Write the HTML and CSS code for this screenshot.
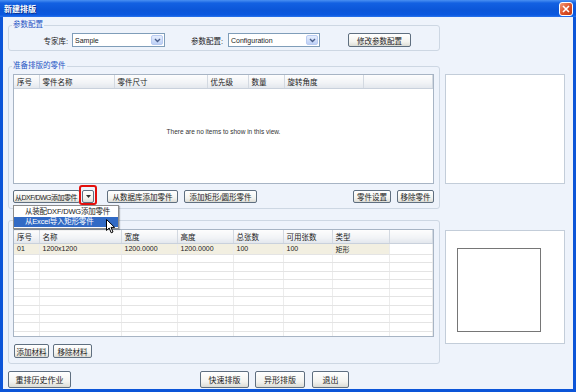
FILE: index.html
```html
<!DOCTYPE html>
<html lang="zh-CN">
<head>
    <meta charset="UTF-8">
    <title>新建排版</title>
    <link rel="stylesheet" href="styles.css">
</head>
<body>

<div class="window">
    <div class="titlebar">
        <span class="title">新建排版</span>
        <span class="close">
            <svg width="8" height="8" viewBox="0 0 8 8"><path d="M1 1l6 6M7 1L1 7" stroke="#fff" stroke-width="1.6"/></svg>
        </span>
    </div>

    <div class="client">
        <!-- 参数配置 -->
        <div class="group group-params">
            <div class="group-title">参数配置</div>
            <div class="param-row">
                <label class="param-label label-lib">专家库:</label>
                <div class="combo combo-lib">
                    <span>Sample</span>
                    <i class="combo-btn"><svg width="7" height="5" viewBox="0 0 7 5"><path d="M1 1l2.5 2.5L6 1" fill="none" stroke="#4a5f8c" stroke-width="1.4"/></svg></i>
                </div>
                <label class="param-label label-cfg">参数配置:</label>
                <div class="combo combo-cfg">
                    <span>Configuration</span>
                    <i class="combo-btn"><svg width="7" height="5" viewBox="0 0 7 5"><path d="M1 1l2.5 2.5L6 1" fill="none" stroke="#4a5f8c" stroke-width="1.4"/></svg></i>
                </div>
                <button class="btn btn-edit">修改参数配置</button>
            </div>
        </div>

        <!-- 零件 -->
        <div class="row row-parts">
            <div class="group group-parts">
                <div class="group-title">准备排版的零件</div>
                <div class="listview list-parts">
                    <table>
                        <colgroup>
                            <col style="width:25px"><col style="width:75px"><col style="width:93px">
                            <col style="width:41px"><col style="width:36px"><col style="width:79px"><col>
                        </colgroup>
                        <tr>
                            <th>序号</th><th>零件名称</th><th>零件尺寸</th><th>优先级</th><th>数量</th><th>旋转角度</th><th></th>
                        </tr>
                    </table>
                    <div class="empty-msg">There are no items to show in this view.</div>
                </div>
                <div class="btn-row">
                    <div class="split">
                        <button class="btn btn-dxf">从DXF/DWG添加零件</button>
                        <button class="btn btn-arrow"><svg width="5" height="3" viewBox="0 0 5 3"><path d="M0 0h5L2.5 3z" fill="#333"/></svg></button>
                        <span class="mark"></span>
                        <div class="menu">
                            <div class="menu-item">从装配DXF/DWG添加零件</div>
                            <div class="menu-item active">从Excel导入矩形零件</div>
                        </div>
                        <svg class="cursor" width="10" height="15" viewBox="0 0 10 15">
                            <path d="M0.5 0.5V11.5L3.2 9L5.2 13.8L7 13L5 8.4H8.6Z" fill="#fff" stroke="#000" stroke-width="1"/>
                        </svg>
                    </div>
                    <button class="btn btn-db">从数据库添加零件</button>
                    <button class="btn btn-rect">添加矩形/圆形零件</button>
                    <button class="btn btn-set">零件设置</button>
                    <button class="btn btn-del">移除零件</button>
                </div>
            </div>
            <div class="preview preview-parts"></div>
        </div>

        <!-- 材料 (group title is covered by the open menu) -->
        <div class="row row-sheets">
            <div class="group group-sheets">
                <div class="listview list-sheets">
                    <table>
                        <colgroup>
                            <col style="width:25px"><col style="width:82px"><col style="width:56px"><col style="width:56px">
                            <col style="width:50px"><col style="width:49px"><col style="width:57px"><col>
                        </colgroup>
                        <tr>
                            <th>序号</th><th>名称</th><th>宽度</th><th>高度</th><th>总张数</th><th>可用张数</th><th>类型</th><th></th>
                        </tr>
                        <tr class="data">
                            <td class="sel">01</td><td class="sel">1200x1200</td><td class="sel">1200.0000</td><td class="sel">1200.0000</td>
                            <td class="sel">100</td><td class="sel">100</td><td class="sel">矩形</td><td></td>
                        </tr>
                        <tr class="empty"><td></td><td></td><td></td><td></td><td></td><td></td><td></td><td></td></tr>
                        <tr class="empty"><td></td><td></td><td></td><td></td><td></td><td></td><td></td><td></td></tr>
                        <tr class="empty"><td></td><td></td><td></td><td></td><td></td><td></td><td></td><td></td></tr>
                        <tr class="empty"><td></td><td></td><td></td><td></td><td></td><td></td><td></td><td></td></tr>
                        <tr class="empty"><td></td><td></td><td></td><td></td><td></td><td></td><td></td><td></td></tr>
                        <tr class="empty"><td></td><td></td><td></td><td></td><td></td><td></td><td></td><td></td></tr>
                        <tr class="empty"><td></td><td></td><td></td><td></td><td></td><td></td><td></td><td></td></tr>
                        <tr class="empty"><td></td><td></td><td></td><td></td><td></td><td></td><td></td><td></td></tr>
                        <tr class="empty"><td></td><td></td><td></td><td></td><td></td><td></td><td></td><td></td></tr>
                        <tr class="empty"><td></td><td></td><td></td><td></td><td></td><td></td><td></td><td></td></tr>
                        <tr class="empty"><td></td><td></td><td></td><td></td><td></td><td></td><td></td><td></td></tr>
                    </table>
                </div>
                <div class="btn-row">
                    <button class="btn btn-add">添加材料</button>
                    <button class="btn btn-remove">移除材料</button>
                </div>
            </div>
            <div class="preview preview-sheets">
                <div class="sheet-shape"></div>
            </div>
        </div>

        <div class="footer">
            <button class="btn btn-lg btn-history">重排历史作业</button>
            <div class="footer-main">
                <button class="btn btn-lg btn-fast">快速排版</button>
                <button class="btn btn-lg btn-shape">异形排版</button>
                <button class="btn btn-lg btn-exit">退出</button>
            </div>
        </div>
    </div>
</div>

</body>
</html>
```

FILE: styles.css
```css
* {
    margin: 0;
    padding: 0;
    box-sizing: border-box;
}

body {
    width: 576px;
    height: 392px;
    font-family: 'Liberation Sans', 'Noto Sans CJK SC', sans-serif;
    font-size: 7.5px;
    color: #1b1b1b;
    background: #eef3fb;
    overflow: hidden;
}

.window {
    width: 576px;
    height: 392px;
    display: flex;
    flex-direction: column;
}

/* title bar */
.titlebar {
    height: 17px;
    flex: none;
    display: flex;
    align-items: center;
    justify-content: space-between;
    padding: 0 3px 0 4px;
    background: linear-gradient(#4a90f2 0%, #1361e2 18%, #0b56d8 60%, #0a58e0 88%, #2a74ec 100%);
    color: #fff;
}

.title {
    font-size: 8px;
    font-weight: bold;
    text-shadow: 1px 1px 0 #0a2f8a;
}

.close {
    width: 14px;
    height: 14px;
    border: 1px solid #fff;
    border-radius: 3px;
    background: linear-gradient(135deg, #f19a78, #dc4f26 55%, #c03a14);
    display: flex;
    align-items: center;
    justify-content: center;
}

.client {
    flex: 1;
    border: 3px solid #0c55d8;
    border-top: none;
    padding: 8px 0 0 5px;
    display: flex;
    flex-direction: column;
}

.row {
    display: flex;
    align-items: flex-start;
    gap: 5px;
}

/* group boxes */
.group {
    width: 432px;
    border: 1px solid #cdd7e3;
    border-radius: 3px;
}

.group-title {
    width: fit-content;
    line-height: 10px;
    margin: -6px 0 0 3px;
    padding: 0 1px;
    color: #1f55c4;
    background: #eef3fb;
}

.group-params {
    height: 26px;
}

.param-row {
    display: flex;
    align-items: center;
    height: 14px;
    margin-top: 3px;
}

.param-label {
    text-align: right;
}

.label-lib {
    width: 59px;
}

.label-cfg {
    width: 58px;
}

.combo {
    height: 14px;
    display: flex;
    align-items: center;
    justify-content: space-between;
    background: #fff;
    border: 1px solid #7f9db9;
    padding: 0 1px 0 2px;
    font-size: 7px;
}

.combo-lib {
    width: 93px;
    margin-left: 4px;
}

.combo-cfg {
    width: 92px;
    margin-left: 5px;
}

.combo-btn {
    width: 12px;
    height: 10px;
    display: flex;
    align-items: center;
    justify-content: center;
    border: 1px solid #b9cbf1;
    border-radius: 2px;
    background: linear-gradient(#e6eefd, #bdd0f6);
}

/* buttons */
.btn {
    height: 13px;
    font: inherit;
    color: #1b1b1b;
    border: 1px solid #5f6f80;
    border-radius: 2px;
    background: linear-gradient(#ffffff, #f3f3ef 65%, #dcdcd5);
    white-space: nowrap;
    text-align: center;
}

.btn-edit {
    width: 63px;
    height: 14px;
    margin-left: 28px;
}

.btn-row {
    display: flex;
    align-items: center;
    padding: 0 5px 0 4px;
}

/* list views */
.listview {
    background: #fff;
    border: 1px solid #a7b4c4;
    overflow: hidden;
    margin: 0 5px 0 4px;
}

.listview table {
    width: 100%;
    border-collapse: collapse;
    table-layout: fixed;
}

.listview th {
    height: 13px;
    font-weight: normal;
    text-align: left;
    padding: 0 3px;
    background: linear-gradient(#fdfdfd, #f1f3f6 60%, #e3e7ed);
    border-right: 1px solid #d3d9e1;
    border-bottom: 1px solid #c9d1dc;
    white-space: nowrap;
    overflow: hidden;
}

.listview td {
    padding: 0 3px;
    border-right: 1px solid #ececec;
    border-bottom: 1px solid #e4e4e4;
    white-space: nowrap;
    overflow: hidden;
    font-size: 7px;
}

.listview tr.data td {
    height: 10px;
}

.listview td.sel {
    background: #f2efe1;
}

.listview tr.empty td {
    height: 8.6px;
}

.list-parts {
    height: 110px;
    margin-top: 3px;
}

.empty-msg {
    padding-top: 38px;
    line-height: 10px;
    text-align: center;
    font-size: 6.5px;
    color: #333;
}

.group-parts {
    height: 143px;
}

.group-parts .btn-row {
    margin-top: 6px;
}

.split {
    position: relative;
    display: flex;
    align-items: center;
}

.btn-dxf {
    width: 67px;
    padding: 0 1px;
    text-align: left;
    font-size: 7px;
    letter-spacing: -0.5px;
}

.btn-arrow {
    width: 12px;
    margin-left: 2px;
    display: flex;
    align-items: center;
    justify-content: center;
}

.mark {
    position: absolute;
    left: 66px;
    top: -5px;
    width: 18px;
    height: 20px;
    border: 2px solid #e3100c;
    border-radius: 3px;
}

.menu {
    position: absolute;
    top: calc(100% + 2px);
    left: 0;
    width: 106px;
    padding: 1px 0;
    background: #fff;
    border: 1px solid #8d8d8d;
    box-shadow: 1px 1px 1px rgba(0, 0, 0, 0.25);
    z-index: 2;
}

.menu-item {
    height: 10px;
    line-height: 10px;
    padding-left: 11px;
    white-space: nowrap;
    letter-spacing: -0.2px;
}

.menu-item.active {
    background: #316ac5;
    color: #fff;
}

.cursor {
    position: absolute;
    left: 93px;
    top: 29px;
    z-index: 3;
}

.btn-db {
    width: 71px;
    margin-left: 13px;
}

.btn-rect {
    width: 73px;
    margin-left: 6px;
}

.btn-set {
    width: 38px;
    margin-left: auto;
}

.btn-del {
    width: 37px;
    margin-left: 6px;
}

.row-parts {
    margin-top: 15px;
}

.row-sheets {
    margin-top: 11px;
}

.group-sheets {
    height: 144px;
    padding-top: 8px;
}

.list-sheets {
    height: 108px;
}

.group-sheets .btn-row {
    margin-top: 7px;
}

.btn-add {
    width: 35px;
    height: 14px;
    margin-left: 1px;
}

.btn-remove {
    width: 39px;
    height: 14px;
    margin-left: 4px;
}

/* previews */
.preview {
    width: 120px;
    background: #fff;
    border: 1px solid #c3cdd9;
}

.preview-parts {
    height: 110px;
    margin-top: 8px;
}

.preview-sheets {
    height: 114px;
    margin-top: 10px;
    padding: 17px 0 0 11px;
}

.sheet-shape {
    width: 84px;
    height: 84px;
    border: 1px solid #767676;
}

/* footer */
.footer {
    display: flex;
    margin-top: 7px;
}

.btn-lg {
    height: 17px;
    font-size: 8px;
}

.btn-history {
    width: 63px;
}

.footer-main {
    display: flex;
    gap: 6px;
    margin-left: 129px;
}

.btn-fast {
    width: 49px;
}

.btn-shape {
    width: 50px;
}

.btn-exit {
    width: 37px;
    margin-left: 1px;
}
```
